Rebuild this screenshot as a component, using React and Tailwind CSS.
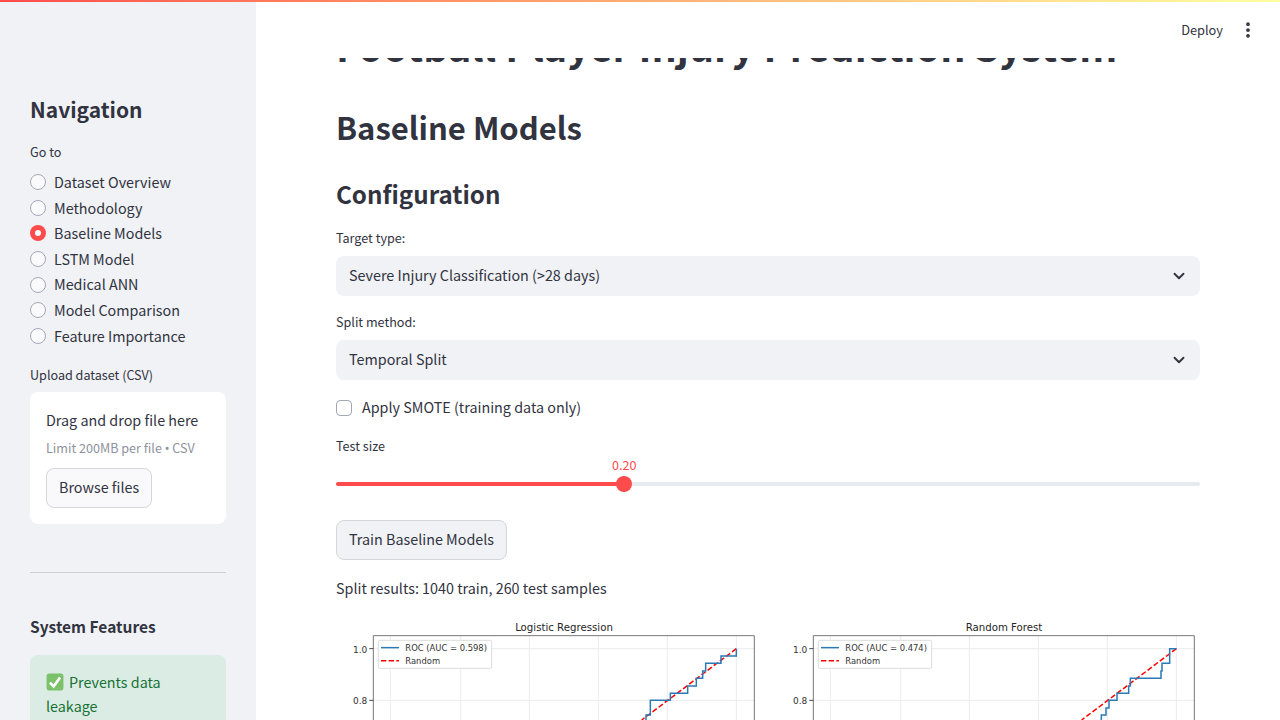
import { ChevronDown, EllipsisVertical } from 'lucide-react'

const PAGES = [
  'Dataset Overview',
  'Methodology',
  'Baseline Models',
  'LSTM Model',
  'Medical ANN',
  'Model Comparison',
  'Feature Importance'
]

// chart coordinates are in 3x pixels, taken off the plot image
const GRID_X = [181, 392, 598, 805, 1012, 1219]
const LOGREG_CURVE = '1219,116 1219,138 1173,138 1173,160 1127,160 1127,183 1118,183 1118,205 1099,205 1099,228 1073,228 1073,250 1021,250 1021,271 961,271 961,315 948,315 948,340'
const FOREST_CURVE = '1220,116 1199,116 1199,160 1176,160 1176,183 1173,183 1173,205 1081,205 1081,228 1076,228 1076,250 1041,250 1041,271 1017,271 1017,294 1008,294 1008,315 994,315 994,340'

function RocChart({ title, auc, curve }) {
  return (
    <svg viewBox="18 0 1272 330" width="424" height="110" className="block">
      <text x="702" y="63" textAnchor="middle" fontFamily="DejaVu Sans" fontSize="30.6" fill="#262626">{title}</text>
      {GRID_X.map((x) => (
        <line key={x} x1={x} x2={x} y1="77" y2="330" stroke="#ececec" strokeWidth="3" />
      ))}
      <line x1="130" x2="1273" y1="116" y2="116" stroke="#ececec" strokeWidth="3" />
      <line x1="130" x2="1273" y1="271" y2="271" stroke="#ececec" strokeWidth="3" />
      <polyline points="1219,116 935,330" fill="none" stroke="#ff0000" strokeWidth="4.5" strokeDasharray="16 7" />
      <polyline points={curve} fill="none" stroke="#2a7ab5" strokeWidth="4.5" />
      <path d="M130 330V77H1273V330" fill="none" stroke="#777" strokeWidth="3" />
      <line x1="118" x2="130" y1="116" y2="116" stroke="#444" strokeWidth="3" />
      <line x1="118" x2="130" y1="271" y2="271" stroke="#444" strokeWidth="3" />
      <text x="112" y="128" textAnchor="end" fontFamily="DejaVu Sans" fontSize="27" fill="#333">1.0</text>
      <text x="112" y="283" textAnchor="end" fontFamily="DejaVu Sans" fontSize="27" fill="#333">0.8</text>
      <rect x="145" y="91" width="340" height="84" rx="4" fill="#fff" stroke="#dcdcdc" strokeWidth="3" />
      <line x1="153" x2="207" y1="113" y2="113" stroke="#2a7ab5" strokeWidth="4.5" />
      <line x1="153" x2="207" y1="152" y2="152" stroke="#ff0000" strokeWidth="4.5" strokeDasharray="16 7" />
      <text x="226" y="122" fontFamily="DejaVu Sans" fontSize="25.2" fill="#333">ROC (AUC = {auc})</text>
      <text x="226" y="161" fontFamily="DejaVu Sans" fontSize="25.2" fill="#333">Random</text>
    </svg>
  )
}

function Select({ value }) {
  return (
    <div className="flex h-10 items-center justify-between rounded-lg bg-[#f0f2f6] pl-[13px] pr-3">
      <span className="pb-[2px]">{value}</span>
      <ChevronDown size={18} strokeWidth={2.5} />
    </div>
  )
}

function Sidebar() {
  return (
    <aside className="flex h-full w-64 shrink-0 flex-col overflow-hidden bg-[#f0f2f6] px-[30px] pt-[91px] text-[#31333f]">
      <h2 className="text-[21px] leading-[36px] font-semibold">Navigation</h2>
      <p className="mt-[15px] text-[12.6px] leading-5">Go to</p>
      <div className="mt-[8.3px] flex flex-col gap-[1.6px]">
        {PAGES.map((page) => {
          const active = page === 'Baseline Models'
          return (
            <div key={page} className="flex h-6 items-center gap-2">
              {active ? (
                <span className="flex h-4 w-4 items-center justify-center rounded-full bg-[#ff4b4b]">
                  <span className="h-1.5 w-1.5 rounded-full bg-white" />
                </span>
              ) : (
                <span className="h-4 w-4 rounded-full border border-[#a3a8b4] bg-[#fafafc]" />
              )}
              <span className="pb-[1px]">{page}</span>
            </div>
          )
        })}
      </div>
      <p className="mt-[17px] text-[12.6px] leading-5">Upload dataset (CSV)</p>
      <div className="mt-[7px] flex h-[132px] shrink-0 flex-col items-start rounded-lg bg-white px-4 pt-4">
        <p className="leading-6">Drag and drop file here</p>
        <p className="mt-[6px] text-[12.6px] leading-5 text-[#8e929c]">
          Limit 200MB per file <span className="font-['Noto_Sans']">•</span> CSV
        </p>
        <button className="mt-[9px] flex h-10 items-center rounded-lg border border-[#d5d6da] bg-[#f9f9fb] px-3 pb-[2px]">
          Browse files
        </button>
      </div>
      <hr className="mt-12 border-[#cfd1d6]" />
      <h3 className="mt-[39px] text-[15.5px] leading-7 font-semibold">System Features</h3>
      <div className="mt-[15px] rounded-lg bg-[#dbece5] px-4 pt-[15px] pb-4 leading-6 text-[#177233]">
        <svg viewBox="0 0 16 16" width="18" height="18" className="mr-[5px] inline-block align-[-3px]">
          <rect x="0.5" y="0.5" width="15" height="15" rx="2.5" fill="#7cc26b" />
          <path d="M3.5 8.5 6.8 12 12.5 4" fill="none" stroke="#fff" strokeWidth="2.4" />
        </svg>
        Prevents data leakage
      </div>
    </aside>
  )
}

export default function App() {
  return (
    <div className="relative flex h-screen w-full overflow-hidden font-['Noto_Sans_CJK_SC','Source_Sans_Pro',sans-serif] text-[14.35px] text-[#31333f]">
      <Sidebar />
      <main className="relative h-full flex-1 overflow-hidden px-20">
        <h1 className="mt-[18px] text-[39.45px] leading-[53px] font-bold whitespace-nowrap">
          Football Player Injury Prediction System
        </h1>
        <h2 className="mt-[34px] text-[31px] leading-[44px] font-semibold">Baseline Models</h2>
        <h3 className="mt-[27px] text-[24.2px] leading-9 font-semibold">Configuration</h3>
        <p className="mt-4 text-[12.6px] leading-5">Target type:</p>
        <div className="mt-2">
          <Select value="Severe Injury Classification (>28 days)" />
        </div>
        <p className="mt-4 text-[12.6px] leading-5">Split method:</p>
        <div className="mt-2">
          <Select value="Temporal Split" />
        </div>
        <div className="mt-4 flex h-6 items-center gap-2.5">
          <span className="h-4 w-4 rounded-[4px] border border-[#a3a8b4] bg-white" />
          <span className="pb-[2px]">Apply SMOTE (training data only)</span>
        </div>
        <p className="mt-4 text-[12.6px] leading-5">Test size</p>
        <p className="-mt-[1px] pl-[276px] text-[12.6px] leading-5 text-[#ff4b4b]">0.20</p>
        <div className="relative mt-[7px] flex h-1 rounded-full bg-[#e6eaf1]">
          <div className="h-1 w-[288px] rounded-full bg-[#ff4b4b]" />
          <div className="absolute top-[-6px] left-[280px] h-4 w-4 rounded-full bg-[#ff4b4b]" />
        </div>
        <button className="mt-[34px] flex h-10 items-center rounded-lg border border-[#d5d6da] bg-[#f0f2f6] px-3 pb-[2px]">
          Train Baseline Models
        </button>
        <p className="mt-4 leading-6">Split results: 1040 train, 260 test samples</p>
        <div className="mt-[10px] grid grid-cols-2 gap-4">
          <RocChart title="Logistic Regression" auc="0.598" curve={LOGREG_CURVE} />
          <RocChart title="Random Forest" auc="0.474" curve={FOREST_CURVE} />
        </div>
        {/* Streamlit's fixed header sits over the scrolled title */}
        <div className="absolute top-0 right-0 left-0 flex h-[58px] items-center justify-end bg-white pt-[2px] pr-[22px] text-[12.8px]">
          <span className="mr-[15px]">Deploy</span>
          <EllipsisVertical size={20} strokeWidth={2.5} />
        </div>
      </main>
      <div className="absolute top-0 right-0 left-0 h-0.5 bg-gradient-to-r from-[#ff4b4b] to-[#ffffa0]" />
    </div>
  )
}
